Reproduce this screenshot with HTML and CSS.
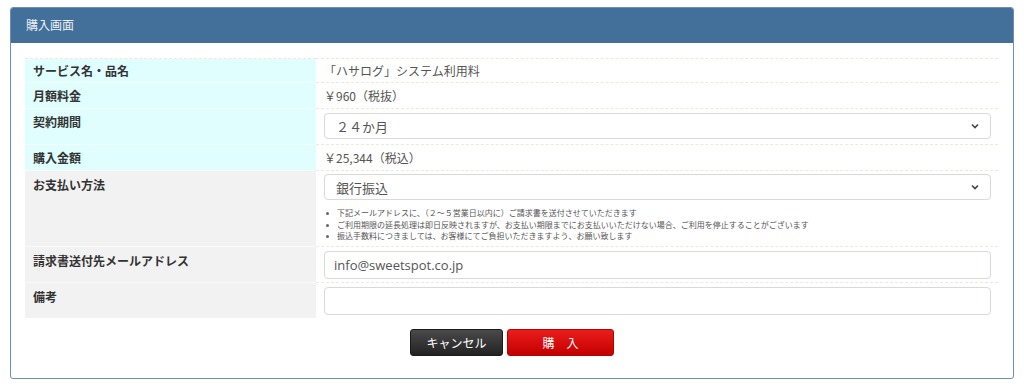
FILE: index.html
```html
<!DOCTYPE html>
<html lang="ja">
<head>
    <meta charset="UTF-8">
    <title>購入画面</title>
    <link rel="stylesheet" href="styles.css">
</head>
<body>
    <div class="panel">
        <div class="panel-header">購入画面</div>
        <div class="panel-body">
            <table class="buy-table">
                <tr class="row-info row-first">
                    <th>サービス名・品名</th>
                    <td>「ハサログ」システム利用料</td>
                </tr>
                <tr class="row-info">
                    <th>月額料金</th>
                    <td>￥960（税抜）</td>
                </tr>
                <tr class="row-info">
                    <th>契約期間</th>
                    <td class="field">
                        <div class="select-wrap">
                            <select class="form-control">
                                <option>２４か月</option>
                            </select>
                            <svg class="chevron" width="8" height="6" viewBox="0 0 8 6"><path d="M1 1.5 L4 4.5 L7 1.5" fill="none" stroke="#444" stroke-width="1.6"/></svg>
                        </div>
                    </td>
                </tr>
                <tr class="row-info">
                    <th>購入金額</th>
                    <td>￥25,344（税込）</td>
                </tr>
                <tr class="row-input">
                    <th>お支払い方法</th>
                    <td class="field field-pay">
                        <div class="select-wrap">
                            <select class="form-control">
                                <option>銀行振込</option>
                            </select>
                            <svg class="chevron" width="8" height="6" viewBox="0 0 8 6"><path d="M1 1.5 L4 4.5 L7 1.5" fill="none" stroke="#444" stroke-width="1.6"/></svg>
                        </div>
                        <ul class="notes">
                            <li>下記メールアドレスに、（２～５営業日以内に）ご請求書を送付させていただきます</li>
                            <li>ご利用期限の延長処理は即日反映されますが、お支払い期限までにお支払いいただけない場合、ご利用を停止することがございます</li>
                            <li>振込手数料につきましては、お客様にてご負担いただきますよう、お願い致します</li>
                        </ul>
                    </td>
                </tr>
                <tr class="row-input">
                    <th>請求書送付先メールアドレス</th>
                    <td class="field"><input type="text" class="form-control" value="info@sweetspot.co.jp"></td>
                </tr>
                <tr class="row-input">
                    <th>備考</th>
                    <td class="field"><input type="text" class="form-control"></td>
                </tr>
            </table>
            <div class="actions">
                <button class="btn btn-cancel">キャンセル</button>
                <button class="btn btn-buy">購　入</button>
            </div>
        </div>
    </div>
</body>
</html>
```

FILE: styles.css
```css
* { margin: 0; padding: 0; box-sizing: border-box; }
body {
    font-family: "Noto Sans CJK JP", "Noto Sans", sans-serif;
    background: #fff;
    padding: 7px 10px 0 10px;
    color: #555;
}
.panel { border: 1px solid #6d8fb3; border-radius: 3px; height: 372px; width: 1004px; }
.panel-header { background: #43709b; color: #eef2f6; font-size: 12px; height: 35px; line-height: 34px; padding-left: 15px; border-radius: 2px 2px 0 0; }
.panel-body { padding: 15px 15px 0 14px; }

/* table rows */
.buy-table { width: 973px; border-collapse: collapse; font-size: 12px; }
.buy-table th { width: 291px; text-align: left; vertical-align: top; font-weight: bold; color: #333; padding: 4px 8px 0 8px; line-height: 17px; }
.buy-table td { padding: 4px 7px 0 8px; line-height: 17px; vertical-align: top; border-top: 1px dashed #ecebd8; }
.row-info th { background: #e0fefe; border-top: 1px solid #f3ffff; }
.row-input th { background: #f2f2f2; border-top: 1px solid #fafafa; }
.row-info { height: 26px; }
.row-first { height: 24px; }
.row-first th, .row-first td { padding-top: 3px; border-top: 1px dashed #ecebd8; }
.row-input th { padding-top: 5px; }
.buy-table td.field { padding: 4px 7px 3px 8px; }
.row-info td.field { padding-bottom: 5px; }
.buy-table td.field-pay { padding-top: 3px; padding-bottom: 0; }

.select-wrap { position: relative; }
.form-control {
    display: block; width: 667px; height: 28px; border: 1px solid #d6d9de; border-radius: 4px;
    background: #fff; font-family: "Noto Sans CJK JP", "Open Sans", sans-serif; font-size: 13px; color: #555;
    padding: 0 10px; outline: none;
}
select.form-control { appearance: none; -webkit-appearance: none; padding-left: 11px; height: 26px; }
input.form-control { font-family: "Open Sans", "Noto Sans CJK JP", sans-serif; padding-left: 9px; }
.chevron { position: absolute; right: 12px; top: 10px; }

.notes { list-style: none; margin: 7px 0 4px 0; font-size: 8px; line-height: 11.5px; color: #555; }
.notes li { position: relative; padding-left: 11px; margin-left: 2px; }
.notes li::before { content: ""; position: absolute; left: 0; top: 5px; width: 3px; height: 3px; border-radius: 50%; background: #666; }

.actions { display: flex; justify-content: center; gap: 4px; padding: 11px 0 0 1px; }
.btn { height: 27px; border-radius: 3px; color: #fff; font-family: "Noto Sans CJK JP", sans-serif; font-size: 12px; cursor: pointer; }
.btn-cancel { width: 93px; background: linear-gradient(#4a4a4a, #222); border: 1px solid #1a1a1a; }
.btn-buy { width: 107px; background: linear-gradient(#ec1c1c, #c20000); border: 1px solid #b00; }
```
